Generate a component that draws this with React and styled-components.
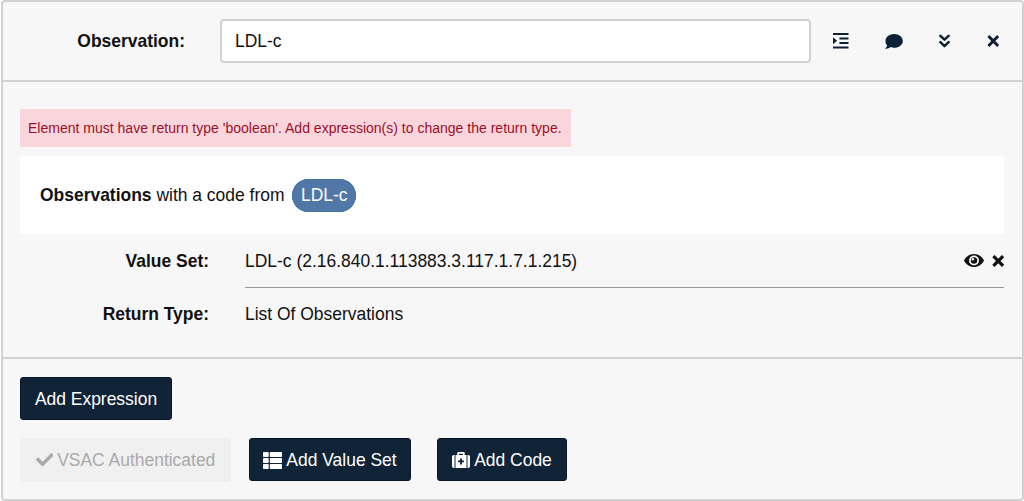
import React from 'react';
import styled, { createGlobalStyle, css } from 'styled-components';
import { FaCheck } from 'react-icons/fa';

const GlobalStyle = createGlobalStyle`
  * { box-sizing: border-box; }
  body { margin: 0; background: #fff; overflow: hidden; }
  button, input { font: inherit; }
  svg { display: block; flex: none; }
`;

const Card = styled.article`
  margin: 0 0 0 1px;
  width: 1023px;
  height: 501px;
  border: 2px solid #d2d2d2;
  border-radius: 4px;
  background: #f7f7f7;
  color: #111;
  font: 17.47px/25px "Liberation Sans", Arial, sans-serif;
  display: flex;
  flex-direction: column;
`;

const Header = styled.header`
  height: 80px;
  border-bottom: 2px solid #d2d2d2;
  display: flex;
  align-items: center;
  flex: none;
`;

const TitleLabel = styled.label`
  width: 182px;
  flex: none;
  text-align: right;
  font-weight: bold;
`;

const TitleInput = styled.input`
  width: 591px;
  height: 44px;
  flex: none;
  margin-left: 35px;
  padding: 0 13px;
  border: 2px solid #d2d2d2;
  border-radius: 4px;
  background: #fff;
  color: #111;
  outline: none;
`;

const HeaderActions = styled.div`
  display: flex;
  align-items: center;
  margin-left: 22px;
  gap: 36.4px;
`;

const IconButton = styled.button`
  border: 0;
  padding: 0;
  background: none;
  color: ${(p) => p.$color || '#0e2034'};
  display: flex;
`;

const Body = styled.section`
  height: 277px;
  padding: 27px 18px 0 17px;
  border-bottom: 2px solid #d2d2d2;
  flex: none;
`;

const Warning = styled.div`
  width: 551px;
  height: 38px;
  padding-left: 8px;
  line-height: 38px;
  font-size: 14.02px;
  white-space: nowrap;
  background: #fad5dc;
  color: #9b1028;
`;

const Phrase = styled.div`
  display: flex;
  align-items: center;
  height: 78px;
  margin: 9px 0 0;
  padding-left: 20px;
  background: #fff;
  white-space: pre;
`;

const Tag = styled.span`
  margin-left: 8px;
  height: 33px;
  padding: 0 8.5px;
  line-height: 33px;
  border-radius: 17px;
  background: #5077a6;
  box-shadow: inset 0 0 0 1px #4173a4;
  color: #fff;
`;

const Field = styled.div`
  display: flex;
  height: ${(p) => p.$height}px;
`;

const FieldLabel = styled.div`
  width: 189px;
  display: flex;
  align-items: center;
  justify-content: flex-end;
  margin-right: 36px;
  font-weight: bold;
`;

const FieldValue = styled.div`
  flex: 1;
  display: flex;
  align-items: center;
  ${(p) => p.$underlined && css`
    padding-top: 1px;
    border-bottom: 1px solid #999;
  `}
`;

const FieldActions = styled.div`
  display: flex;
  align-items: center;
  margin-left: auto;
  padding-bottom: 1px;
  gap: 8px;
`;

const Footer = styled.footer`
  padding: 18px 17px 0;
`;

const ButtonRow = styled.div`
  display: flex;
  margin-bottom: 18px;
`;

const Button = styled.button`
  display: flex;
  align-items: center;
  justify-content: center;
  gap: 4px;
  width: ${(p) => p.$width}px;
  height: ${(p) => (p.disabled ? 44 : 43)}px;
  margin-right: ${(p) => p.$gap || 0}px;
  padding: ${(p) => (p.disabled ? 0 : 1)}px 0 0;
  border: 1px solid #07162b;
  border-radius: 3px;
  background: #112437;
  color: #fff;
  white-space: nowrap;
  &:disabled {
    border-color: #f0f0f0;
    background: #f0f0f0;
    color: #aaa;
  }
`;

const IndentIcon = () => (
  <svg width="15.5" height="15.5" viewBox="0 0 15.5 15.5" fill="currentColor">
    <path d="M0 0h15.5v2H0zM6.4 4.5h9.1v2H6.4zM6.4 9h9.1v2H6.4zM0 13.5h15.5v2H0zM0 4.2l4.1 3.5L0 11.3z" />
  </svg>
);

const CommentIcon = () => (
  <svg width="18" height="15" viewBox="0 0 18 15" fill="currentColor">
    <path d="M9.2 0C14 0 17.8 3 17.8 6.9s-3.8 6.8-8.6 6.8c-1.3 0-2.5-.2-3.6-.6-1.3 1-3 1.7-4.7 1.8-.5 0-.6-.4-.3-.7.9-.9 1.4-1.8 1.5-2.9C1.1 10.1.5 8.6.5 6.9.5 3 4.4 0 9.2 0z" />
  </svg>
);

const ChevronsIcon = () => (
  <svg width="11" height="14" viewBox="0 0 11 14" fill="none" stroke="currentColor" strokeWidth="2.5" strokeLinejoin="round" strokeLinecap="round">
    <path d="M1.4 1.8l4.1 3.9 4.1-3.9M1.4 8.2l4.1 3.9 4.1-3.9" />
  </svg>
);

const CrossIcon = ({ weight }) => (
  <svg width="12.5" height="12" viewBox="0 0 12.500 12" fill="none" stroke="currentColor" strokeWidth={weight}>
    <path d="M1.400 1.100l9.700 9.800M11.100 1.100l-9.700 9.800" />
  </svg>
);

const EyeIcon = () => (
  <svg width="20" height="13" viewBox="0 0 20 13">
    <path d="M0 6.5C2 2.500 5.600 0 10 0s8 2.500 10 6.500c-2 4-5.600 6.500-10 6.500S2 10.500 0 6.500z" fill="currentColor" />
    <circle cx="10" cy="6.500" r="5" fill="#f7f7f7" />
    <circle cx="10" cy="6.500" r="3.200" fill="currentColor" />
    <circle cx="8.900" cy="5.200" r="1.200" fill="#f7f7f7" />
  </svg>
);

const ListIcon = () => (
  <svg width="19" height="17" viewBox="0 0 19 17" fill="currentColor">
    {[0, 6, 12].map((y) => (
      <React.Fragment key={y}>
        <rect x="0" y={y} width="5.7" height="5" rx=".8" />
        <rect x="6.8" y={y} width="12.2" height="5" rx=".8" />
      </React.Fragment>
    ))}
  </svg>
);

const MedkitIcon = () => (
  <svg width="18" height="16" viewBox="0 0 18 16" fill="currentColor">
    <path d="M2.5 3v13H1.800A1.800 1.800 0 0 1 0 14.200V4.800A1.800 1.800 0 0 1 1.800 3zM15.500 3v13h.7a1.800 1.800 0 0 0 1.800-1.800V4.800A1.800 1.800 0 0 0 16.200 3z" />
    <path fillRule="evenodd" d="M3.500 16V3h1.800V1.300C5.300.5 5.800 0 6.600 0h4.800c.8 0 1.300.5 1.300 1.300V3h1.800v13zM7 3h4V1.700H7zM8.100 6.400v2H6v1.900h2.100v2.100h1.900v-2.100H12V8.400h-2v-2z" />
  </svg>
);

export default function App() {
  return (
    <>
      <GlobalStyle />
      <Card>
        <Header>
          <TitleLabel htmlFor="title">Observation:</TitleLabel>
          <TitleInput id="title" defaultValue="LDL-c" />
          <HeaderActions>
            <IconButton aria-label="Indent"><IndentIcon /></IconButton>
            <IconButton aria-label="Comment"><CommentIcon /></IconButton>
            <IconButton aria-label="Collapse"><ChevronsIcon /></IconButton>
            <IconButton aria-label="Delete"><CrossIcon weight={2.9} /></IconButton>
          </HeaderActions>
        </Header>
        <Body>
          <Warning>Element must have return type 'boolean'. Add expression(s) to change the return type.</Warning>
          <Phrase><b>Observations</b> with a code from<Tag>LDL-c</Tag></Phrase>
          <Field $height={54}>
            <FieldLabel>Value Set:</FieldLabel>
            <FieldValue $underlined>
              LDL-c (2.16.840.1.113883.3.117.1.7.1.215)
              <FieldActions>
                <IconButton $color="#111" aria-label="View"><EyeIcon /></IconButton>
                <IconButton $color="#111" aria-label="Remove"><CrossIcon weight={3.2} /></IconButton>
              </FieldActions>
            </FieldValue>
          </Field>
          <Field $height={52}>
            <FieldLabel>Return Type:</FieldLabel>
            <FieldValue>List Of Observations</FieldValue>
          </Field>
        </Body>
        <Footer>
          <ButtonRow><Button $width={152}>Add Expression</Button></ButtonRow>
          <ButtonRow>
            <Button $width={211} $gap={18} disabled><FaCheck />VSAC Authenticated</Button>
            <Button $width={162} $gap={26}><ListIcon />Add Value Set</Button>
            <Button $width={130}><MedkitIcon />Add Code</Button>
          </ButtonRow>
        </Footer>
      </Card>
    </>
  );
}
